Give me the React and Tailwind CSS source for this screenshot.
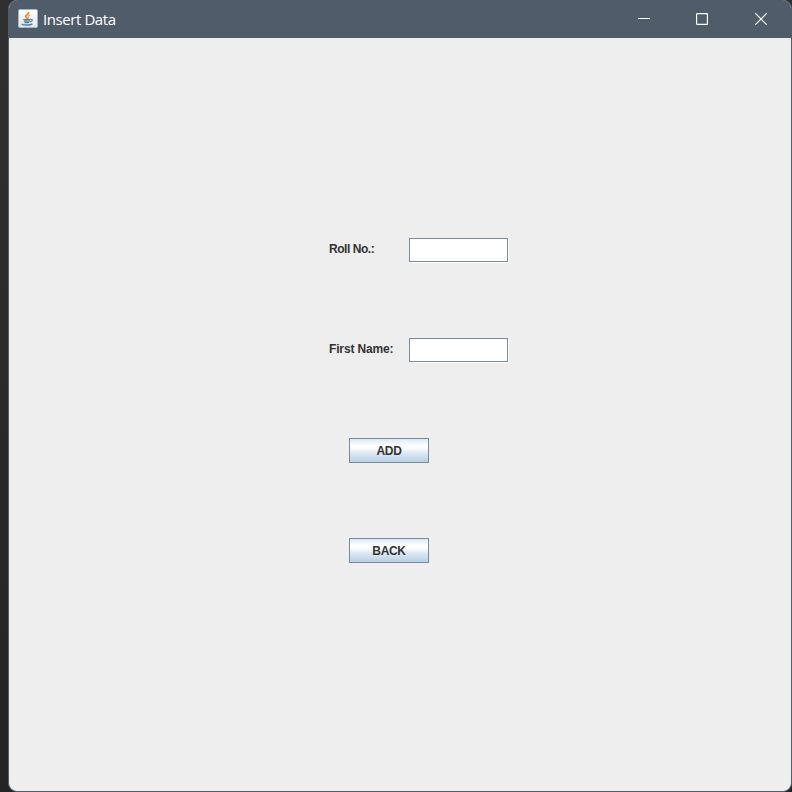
function JavaIcon() {
  return (
    <svg width="20" height="19" viewBox="0 0 20 19" className="block shrink-0">
      <defs>
        <linearGradient id="tile" x1="0" y1="0" x2="0" y2="1">
          <stop offset="0" stopColor="#ffffff" />
          <stop offset="1" stopColor="#dfe5ea" />
        </linearGradient>
      </defs>
      <rect x="0.5" y="0.5" width="19" height="18" rx="1.5" fill="url(#tile)" stroke="#a3b6c5" />
      <path d="M10.6 3C11.2 5.4 7.2 6 7.8 7.8 8.2 8.9 9.3 8.8 9.2 10" fill="none" stroke="#ee8a35" strokeWidth="1.9" />
      <path d="M11.9 5.8C9.3 6.9 11.4 7.9 10.2 9.4" fill="none" stroke="#e9a468" strokeWidth="1.3" />
      <path d="M5.2 10.6H12.2M5.9 12.2H11.8M6.5 13.6H11.2" stroke="#587f9f" strokeWidth="1.3" />
      <path d="M12.2 10.5C15.2 9.9 15 12.4 11.9 12.8" fill="none" stroke="#587f9f" strokeWidth="1.2" />
      <path d="M3.6 14.9C5.2 16.4 12.5 16.3 14.4 14.9" fill="none" stroke="#587f9f" strokeWidth="1.4" />
    </svg>
  );
}

function TitleBar() {
  return (
    <header className="flex h-[38px] shrink-0 bg-[#515c6b] pl-[9px] text-white">
      <div className="pt-[9px]">
        <JavaIcon />
      </div>
      <h1 className="ml-[5px] pt-[9px] font-['Open_Sans','Noto_Sans',sans-serif] text-[15px] leading-5 tracking-[-0.42px] whitespace-nowrap">
        Insert Data
      </h1>
      <div className="ml-auto flex">
        <button aria-label="Minimize" className="flex h-[38px] w-[58px] items-center justify-center">
          <svg width="12" height="12" viewBox="0 0 12 12" shapeRendering="crispEdges">
            <path d="M0 5.5H12" stroke="currentColor" />
          </svg>
        </button>
        <button aria-label="Maximize" className="flex h-[38px] w-[58px] items-center justify-center">
          <svg width="12" height="12" viewBox="0 0 12 12">
            <rect x="0.5" y="0.5" width="11" height="11" rx="1.2" fill="none" stroke="currentColor" strokeWidth="1.3" />
          </svg>
        </button>
        <button aria-label="Close" className="flex h-[38px] w-[60px] items-center justify-center">
          <svg width="12" height="12" viewBox="0 0 12 12">
            <path d="M0.3 0.3L11.7 11.7M11.7 0.3L0.3 11.7" stroke="currentColor" strokeWidth="1.2" />
          </svg>
        </button>
      </div>
    </header>
  );
}

function Field({ label, tracking }) {
  return (
    <label className="flex h-[25px]">
      <span className={`w-20 pt-1 leading-[14px] whitespace-nowrap ${tracking}`}>{label}</span>
      <input className="h-6 w-[99px] border border-[#7a8a99] bg-white shadow-[1px_1px_0_#ffffff] outline-none" />
    </label>
  );
}

function MetalButton({ children }) {
  return (
    <button className="ml-5 block h-[25px] w-20 border border-[#7a8a99] bg-[linear-gradient(to_bottom,#dde8f3_0%,#ffffff_30%,#ffffff_36%,#dde8f3_62%,#b8cfe5_100%)] pt-px text-center leading-[23px] tracking-[-0.3px]">
      {children}
    </button>
  );
}

export default function App() {
  return (
    <div className="h-[792px] w-[792px] overflow-hidden bg-[linear-gradient(to_bottom,#303030,#242424)] pl-2">
      <div className="flex h-[792px] flex-col overflow-hidden rounded-[9px] border-r border-b border-l border-[#515c6b] bg-[#eeeeee]">
        <TitleBar />
        <main className="flex flex-col gap-[75px] pt-[200px] pl-[320px] font-['Liberation_Sans',Arial,sans-serif] text-[12px] font-bold text-[#333333]">
          <Field label="Roll No.:" tracking="tracking-[-0.45px]" />
          <Field label="First Name:" tracking="tracking-[-0.15px]" />
          <MetalButton>ADD</MetalButton>
          <MetalButton>BACK</MetalButton>
        </main>
      </div>
    </div>
  );
}
